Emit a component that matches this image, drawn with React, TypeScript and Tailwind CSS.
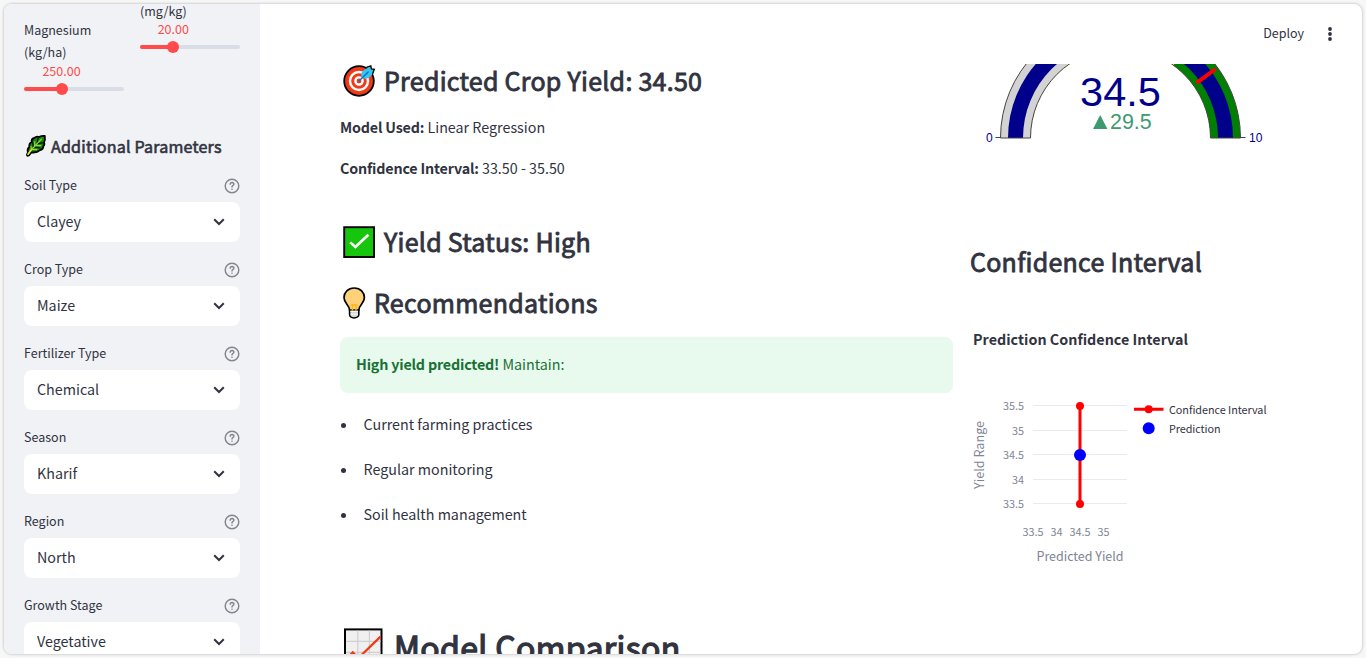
import type { ReactNode } from "react";

const FONT = "font-['Noto_Sans_CJK_SC','Noto_Sans',sans-serif]";

function LeafIcon() {
  return (
    <svg width="24" height="24" viewBox="0 0 24 24" className="shrink-0">
      <path d="M3.6 21.8 Q2 21.2 4 18.6 Q2.8 15 5.4 13 Q4.8 9.4 7.6 8 Q7.4 4.6 10.4 4 Q12.4 2 15 3 Q17.4 1.8 20.8 2 Q21.4 6 20 8.4 Q21 10.6 19.4 12 Q19.2 15.6 16 16.2 Q13 19 7.4 18.4 Q5.6 21.6 3.6 21.8 Z" fill="#128a16" stroke="#000" strokeWidth="1.8" strokeLinejoin="round" />
      <path d="M14 4 L13.2 9 M8.6 8.4 L9.2 12.8 M19 8.8 L14 9.6 M16.6 14 L10.6 13.2" fill="none" stroke="#000" strokeWidth="1.1" />
      <path d="M4.2 20.2 L7 16.2 L17.4 5.2 M7.4 15.6 L7 12.2 M10.6 12 L10.8 7.8 M8.4 15.4 L13 15.6 M11.8 11.4 L16.8 11.6" fill="none" stroke="#a6d52e" strokeWidth="1.1" strokeLinecap="round" />
      <path d="M4 20.2 L7 16.2" fill="none" stroke="#f3e13b" strokeWidth="1.6" strokeLinecap="round" />
    </svg>
  );
}

function TargetIcon() {
  return (
    <svg width="38" height="36" viewBox="0 0 38 36" className="shrink-0">
      <circle cx="19" cy="17" r="14.8" fill="#f03a17" stroke="#000" strokeWidth="1.8" />
      <circle cx="19" cy="17" r="9" fill="none" stroke="#fff" strokeWidth="2.4" />
      <circle cx="19" cy="17" r="3.6" fill="none" stroke="#fff" strokeWidth="2.4" />
      <path d="M21.6 12.8 Q20 8.6 24 6 L30.4 2.2 L31 5 L34.4 5.4 L32 10.6 Q28.6 16 23 14.2 Z" fill="#33c7f5" />
      <path d="M26.4 3.4 L30.8 1.9 L31.4 4.9 L34.3 5.3 L32.6 9.8" fill="none" stroke="#000" strokeWidth="1.4" />
      <path d="M19 17 L28.2 8" stroke="#0a6fd0" strokeWidth="1.5" strokeLinecap="round" />
    </svg>
  );
}

function CheckBoxIcon() {
  return (
    <svg width="38" height="36" viewBox="0 0 38 36" className="shrink-0">
      <rect x="4.2" y="3.2" width="29.8" height="29.8" fill="#16c60c" stroke="#000" strokeWidth="1.9" />
      <path d="M10.2 18.4 L15.4 23 L28.4 10.8" fill="none" stroke="#fff" strokeWidth="2.6" />
    </svg>
  );
}

function BulbIcon() {
  return (
    <svg width="28" height="36" viewBox="0 0 28 36" className="shrink-0">
      <path d="M9.6 23.5 V30 Q10 32.6 14 33 Q18.4 32.6 18.8 30 V23.5 Z" fill="#d8d8d8" stroke="#000" strokeWidth="1.6" />
      <path d="M14.2 3 C8 3 4 7.4 4 12.6 C4 18.6 9.2 19.6 9.6 25 H18.8 C19.2 19.6 24.4 18.6 24.4 12.6 C24.4 7.4 20.4 3 14.2 3 Z" fill="#ffd27a" stroke="#000" strokeWidth="1.7" />
      <path d="M10.8 20 H17.6 M12.4 20 V25.6 M16 20 V25.6" fill="none" stroke="#fdb515" strokeWidth="1.5" />
      <path d="M10.4 26.4 H18 M10.6 29.2 H17.8" stroke="#f4f4f4" strokeWidth="1.2" />
    </svg>
  );
}

function ChartIcon() {
  return (
    <svg width="46" height="44" viewBox="0 0 46 44" className="shrink-0">
      <rect x="5" y="5.4" width="36.5" height="36.5" fill="#f0f0f0" stroke="#000" strokeWidth="2" />
      <path d="M17.8 6.4 V40 M29.4 6.4 V40 M6 17.4 H40.5 M6 28.4 H40.5" stroke="#cfcfcf" strokeWidth="1.2" />
      <path d="M7 34 L12.8 28.4 L18.4 34 L40.5 12.6" fill="none" stroke="#f03a17" strokeWidth="2.2" />
    </svg>
  );
}

function Slider({ value, fill }: { value: string; fill: number }) {
  return (
    <div className="w-[100px]">
      <div className="relative h-[14px] text-[12.5px] leading-[14px] text-[#ff4b4b]">
        <span className="absolute -translate-x-1/2" style={{ left: fill }}>{value}</span>
      </div>
      <div className="relative mt-[9px] h-1 rounded-full bg-[#d9dde8]">
        <div className="h-1 rounded-full bg-[#ff4b4b]" style={{ width: fill }} />
        <div className="absolute -top-1 size-3 -translate-x-1/2 rounded-full bg-[#ff4b4b]" style={{ left: fill }} />
      </div>
    </div>
  );
}

function SelectField({ label, value }: { label: string; value: string }) {
  return (
    <div className="h-[84px] shrink-0">
      <div className="flex h-[26px] items-start justify-between">
        <span className="text-[12.5px] leading-[18px]">{label}</span>
        <svg width="16" height="16" viewBox="0 0 16 16" className="mt-0.5" fill="none" stroke="#83858f" strokeWidth="1.45" strokeLinecap="round">
          <circle cx="8" cy="8" r="6.8" />
          <path d="M6.1 6.2 Q6.3 4.5 8.1 4.5 Q10 4.6 9.9 6.2 Q9.8 7 8.8 7.7 Q8 8.2 8 9.1" />
          <path d="M8 11.2 V11.3" strokeWidth="1.6" />
        </svg>
      </div>
      <div className="flex h-10 items-center justify-between rounded-lg bg-white pr-[15px] pl-[13px]">
        <span className="pb-0.5 text-[14.3px] leading-[20px]">{value}</span>
        <svg width="12" height="8" viewBox="0 0 12 8" fill="none" stroke="#31333f" strokeWidth="2">
          <path d="M1.2 1.3 L6 6 L10.8 1.3" />
        </svg>
      </div>
    </div>
  );
}

const FIELDS = [
  ["Soil Type", "Clayey"],
  ["Crop Type", "Maize"],
  ["Fertilizer Type", "Chemical"],
  ["Season", "Kharif"],
  ["Region", "North"],
  ["Growth Stage", "Vegetative"],
];

function Sidebar() {
  return (
    <aside className="w-64 shrink-0 overflow-hidden bg-[#f0f2f6] px-5">
      <div className="flex h-[128px] gap-4">
        <div className="w-[100px] pt-[15px]">
          <div className="-mb-px h-[46px] text-[12.5px] leading-[22px]">Magnesium<br />(kg/ha)</div>
          <Slider value="250.00" fill={37.5} />
        </div>
        <div className="w-[100px]">
          <div className="-mt-1 h-[22px] text-[12.5px] leading-[22px]">(mg/kg)</div>
          <Slider value="20.00" fill={33.3} />
        </div>
      </div>
      <div className="flex h-[44px] items-start gap-[3px]">
        <div className="pt-[2px]"><LeafIcon /></div>
        <h3 className="text-[16.1px] leading-[28px] font-normal tracking-[0.18px] whitespace-nowrap [-webkit-text-stroke:0.6px_#31333f]">Additional Parameters</h3>
      </div>
      {FIELDS.map(([label, value]) => <SelectField key={label} label={label} value={value} />)}
    </aside>
  );
}

function Heading({ icon, children }: { icon?: ReactNode; children: ReactNode }) {
  return (
    <h2 className="flex h-9 items-center text-[25px] leading-[36px] font-normal tracking-[0.26px] whitespace-nowrap [-webkit-text-stroke:0.85px_#31333f]">
      {icon}
      {children}
    </h2>
  );
}

function arc(r0: number, r1: number, a0: number, a1: number) {
  const p = (r: number, a: number) => {
    const t = Math.PI * (1 - a / 10);
    return `${150.5 + r * Math.cos(t)} ${74 - r * Math.sin(t)}`;
  };
  return `M${p(r1, a0)} A${r1} ${r1} 0 0 1 ${p(r1, a1)} L${p(r0, a1)} A${r0} ${r0} 0 0 0 ${p(r0, a0)} Z`;
}

function Gauge() {
  return (
    <svg width="312" height="90" viewBox="0 0 312 90" className="block overflow-hidden font-['Liberation_Sans',Arial,sans-serif]">
      <path d={arc(90, 120, 0, 3)} fill="#d3d3d3" />
      <path d={arc(90, 120, 3, 7)} fill="#ffff00" />
      <path d={arc(90, 120, 7, 10)} fill="#008000" />
      <path d={arc(97.5, 112.5, 0, 10)} fill="#00008b" />
      <path d={arc(90, 120, 0, 10)} fill="none" stroke="#444" strokeWidth="1" />
      <path d="M226.6 18.8 L245.6 5" stroke="#f00" strokeWidth="4" />
      <path d="M25.5 73.5 H30.5 M270.5 73.5 H275.5" stroke="#444" />
      <g fill="#00008b">
        <text x="22.8" y="78" fontSize="12" textAnchor="end">0</text>
        <text x="279" y="78" fontSize="12">10</text>
        <text x="150.5" y="41.5" fontSize="41.5" textAnchor="middle">34.5</text>
      </g>
      <path d="M123 65 L130.2 51 L137.4 65 Z" fill="#3d9970" />
      <text x="140" y="65" fontSize="21.4" fill="#3d9970">29.5</text>
    </svg>
  );
}

function IntervalChart() {
  const rows = [["35.5", 406], ["35", 431], ["34.5", 455], ["34", 480], ["33.5", 504]] as const;
  const cols = [["33.5", 1033], ["34", 1056.5], ["34.5", 1080], ["35", 1103.5]] as const;
  return (
    <svg width="312" height="260" viewBox="970 320 312 260" className="block">
      <text x="973" y="345" fontSize="14.3" fontWeight="bold" fill="#31333f" textLength="215">Prediction Confidence Interval</text>
      <g fill="#808495" fontSize="10.8">
        {rows.map(([t, y]) => (
          <g key={t}>
            <path d={`M1033 ${y - 0.5} H1127`} stroke="#e6eaf1" />
            <text x="1024" y={y + 4} textAnchor="end">{t}</text>
          </g>
        ))}
        {cols.map(([t, x]) => <text key={t} x={x} y="536" textAnchor="middle">{t}</text>)}
      </g>
      <g fill="#808495" fontSize="12.5">
        <text x="1036.5" y="561" textLength="87">Predicted Yield</text>
        <text transform="translate(983.5 489) rotate(-90)" textLength="68">Yield Range</text>
      </g>
      <path d="M1080 406 V504 M1134 409.2 H1163.5" stroke="#f00" strokeWidth="3" />
      <g fill="#f00">
        <circle cx="1080" cy="406" r="4" />
        <circle cx="1080" cy="504" r="4" />
        <circle cx="1148.7" cy="409.2" r="4" />
      </g>
      <circle cx="1080" cy="455" r="6" fill="#00f" />
      <circle cx="1148.7" cy="428.3" r="6" fill="#00f" />
      <g fill="#31333f" fontSize="10.8">
        <text x="1169" y="414" textLength="97.5">Confidence Interval</text>
        <text x="1169" y="433" textLength="51.5">Prediction</text>
      </g>
    </svg>
  );
}

function Results() {
  return (
    <section className="w-[613px]">
      <Heading icon={<TargetIcon />}><span className="pb-1 pl-[6px]">Predicted Crop Yield: 34.50</span></Heading>
      <div className="mt-[15px] text-[14.3px] leading-[24px]">
        <p className="mb-[17px]"><b className="tracking-[-0.18px]">Model Used:</b> Linear Regression</p>
        <p><b className="tracking-[-0.18px]">Confidence Interval:</b> 33.50 - 35.50</p>
      </div>
      <div className="mt-11"><Heading icon={<CheckBoxIcon />}><span className="pb-0.5 pl-[6px]">Yield Status: High</span></Heading></div>
      <div className="mt-[25px]"><Heading icon={<BulbIcon />}><span className="pb-0.5 pl-[6px]">Recommendations</span></Heading></div>
      <div className="mt-4 flex h-14 items-center rounded-lg bg-[#e8f9ee] px-4 pb-0.5 text-[14.3px] leading-[24px] text-[#177233]">
        <p><b className="tracking-[-0.18px]">High yield predicted!</b> Maintain:</p>
      </div>
      <ul className="mt-[19px] flex flex-col gap-[21px] text-[14.3px] leading-[24px]">
        {["Current farming practices", "Regular monitoring", "Soil health management"].map((t) => (
          <li key={t} className="flex items-center gap-[17.5px] pl-px">
            <span className="mt-0.5 size-[5px] rounded-full bg-[#31333f]" />
            {t}
          </li>
        ))}
      </ul>
    </section>
  );
}

export default function App() {
  return (
    <div className={`h-[658px] w-[1366px] overflow-hidden bg-[#f7f7f7] p-1 text-[#31333f] ${FONT}`}>
      <div className="flex h-[650px] w-[1358px] overflow-hidden rounded-lg bg-white shadow-[0_0_3px_rgba(0,0,0,0.3)]">
        <Sidebar />
        <main className="min-w-0 flex-1 overflow-hidden">
          <header className="flex h-[60px] items-center justify-end gap-[22px] pr-[28px]">
            <span className="pb-px text-[12.5px]">Deploy</span>
            <svg width="8" height="16" viewBox="0 0 8 16" fill="#31333f">
              <circle cx="4" cy="3" r="1.9" />
              <circle cx="4" cy="8" r="1.9" />
              <circle cx="4" cy="13" r="1.9" />
            </svg>
          </header>
          <div className="flex gap-[17px] pl-20">
            <Results />
            <section className="w-[312px]">
              <Gauge />
              <div className="mt-[91px]"><Heading><span className="pb-1">Confidence Interval</span></Heading></div>
              <div className="mt-[39px]"><IntervalChart /></div>
            </section>
          </div>
          <h1 className="mt-[44px] flex h-[48px] items-start pl-20 text-[32px] leading-[44px] font-normal tracking-[0.35px] whitespace-nowrap [-webkit-text-stroke:1.3px_#31333f]">
            <ChartIcon />
            <span className="pl-2">Model Comparison</span>
          </h1>
        </main>
      </div>
    </div>
  );
}
